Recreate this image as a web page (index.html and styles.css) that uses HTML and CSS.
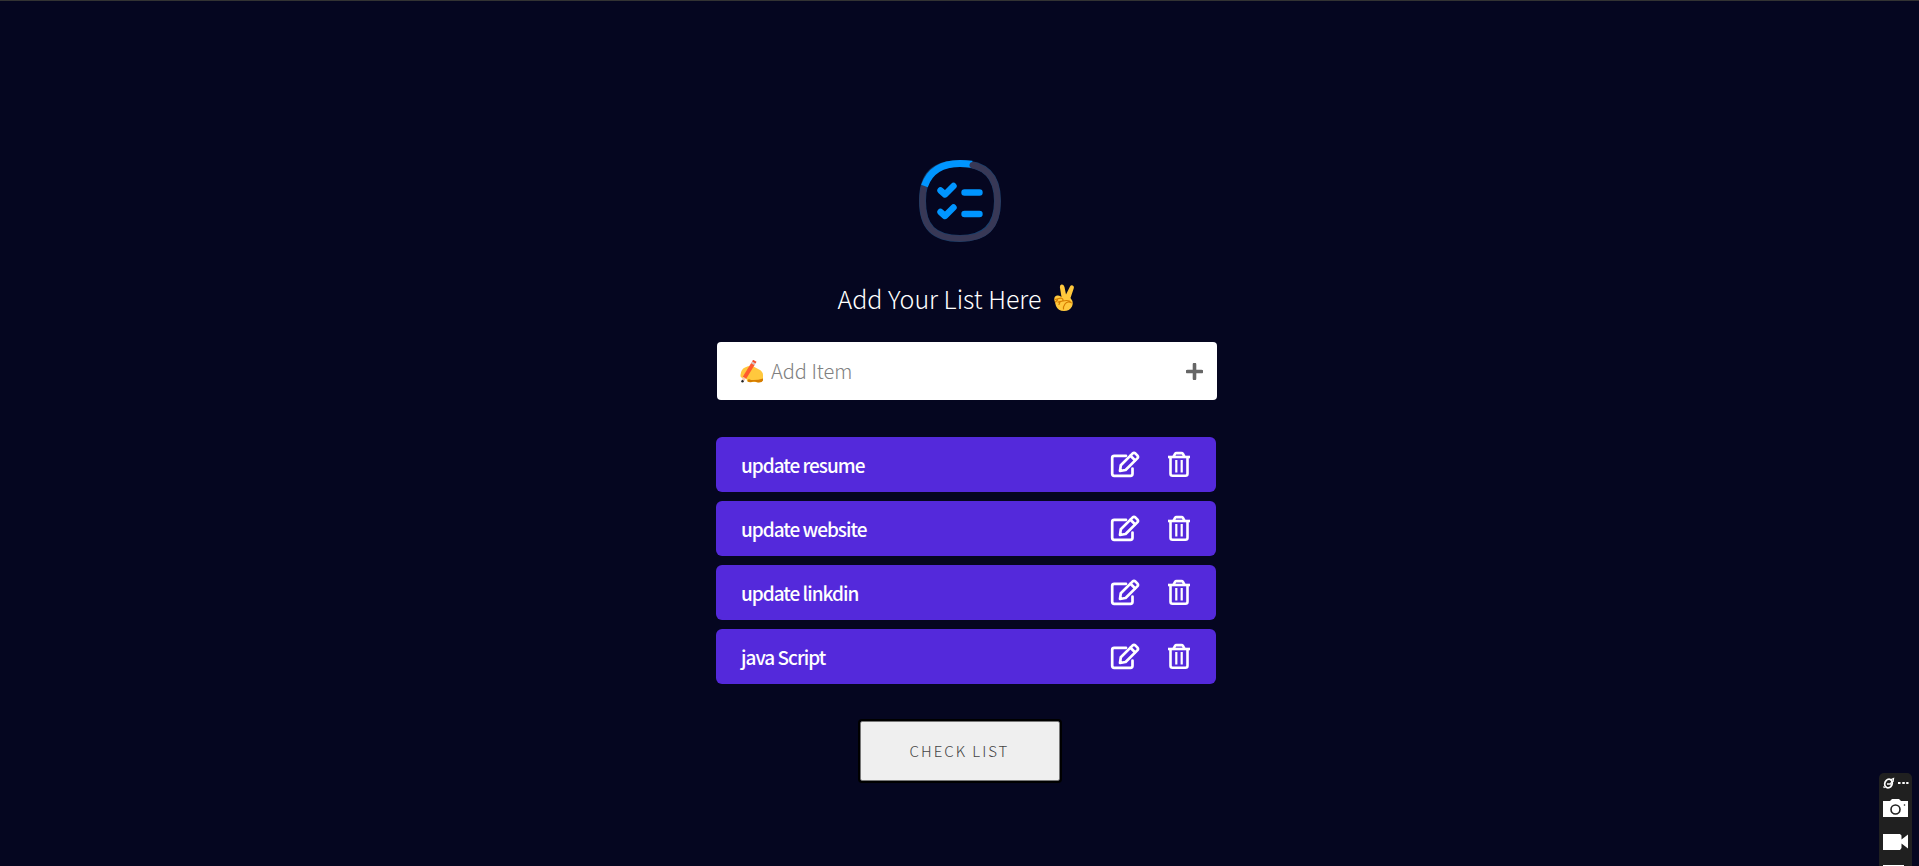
FILE: index.html
```html
<!DOCTYPE html>
<html lang="en">
<head>
<meta charset="utf-8">
<meta name="viewport" content="width=device-width, initial-scale=1">
<title>Check List</title>
<link rel="stylesheet" href="styles.css">
</head>
<body>
<svg class="defs" aria-hidden="true">
  <symbol id="edit" viewBox="0 0 30 27">
    <g fill="none" stroke="#fff" stroke-width="2.700" stroke-linejoin="round" stroke-linecap="round">
      <path d="M16 4.800H4.200Q2.200 4.800 2.200 6.800V22.800Q2.200 24.800 4.200 24.800H20.500Q22.500 24.800 22.500 22.800V17.500"/>
      <path d="M10.800 14.200 22.500 2.600Q24 1.300 25.500 2.600L27.300 4.400Q28.700 5.900 27.300 7.400L15.600 19 10 20Z"/>
      <path d="M20.500 4.700 25 9.200"/>
    </g>
  </symbol>
  <symbol id="trash" viewBox="0 0 22 27">
    <g fill="none" stroke="#fff" stroke-width="2.600">
      <path d="M0 6H22"/>
      <path d="M5.500 5.800 7 2.900Q7.500 2.100 8.500 2.100H13.500Q14.500 2.100 15 2.900L16.500 5.800"/>
      <path d="M2.500 6V22.800Q2.500 24.800 4.500 24.800H17.500Q19.500 24.800 19.500 22.800V6"/>
      <path d="M8.300 9V21.500M13.700 9V21.500" stroke-width="2.200"/>
    </g>
  </symbol>
</svg>
<main class="page">
  <svg class="logo" viewBox="0 0 82 82" role="img" aria-label="Check list">
    <path d="M41 3.500C67 3.500 78.500 17 78.500 41S67 78.500 41 78.500 3.500 67 3.500 41 15 3.500 41 3.500Z" fill="none" stroke="#193f6c" stroke-width="7"/>
    <path d="M53.500 5C71 9 78.500 22 78.500 41 78.500 67 67 78.500 41 78.500S3.500 67 3.500 41Q3.500 34 4.500 28.500" fill="none" stroke="#383856" stroke-width="6" stroke-linecap="round"/>
    <path d="M5.500 26C11 10 23 3.500 41 3.500Q47 3.500 53 4.200" fill="none" stroke="#0095ff" stroke-width="7"/>
    <path d="M53.500 5 58 6.200" stroke="#383856" stroke-width="6" stroke-linecap="round"/>
    <path d="M21.500 30.500 26 34.500 34.500 26M21.500 52 26 56 34.500 47.500M45.500 32.500H60.500M45.500 54H60.500" fill="none" stroke="#0095ff" stroke-width="6.400" stroke-linecap="round" stroke-linejoin="round"/>
  </svg>
  <h1 class="title">Add Your List Here
    <svg class="victory" viewBox="0 0 20 28" aria-hidden="true">
      <path d="M7.500 13 6 4Q5.500 1 7.500 .6T10.500 3L12 10.500 16 2.500Q17 .8 18.700 1.500T19.700 4.500L16.500 14Q20 18 18 22.500 15.500 27 10 27 4 27 2 22L.3 16Q0 12 3 11.500 6 11 7.500 13Z" fill="#ffc83d"/>
      <path d="M1 15.500 7 14Q10 15 8.500 17L4 18.200M1.500 18 3.500 16M9 17Q15 15.500 17 18.500Q13 17 11 20T9.500 25M6 18 5 20.500" fill="none" stroke="#d67d00" stroke-width="1.200" stroke-linecap="round"/>
    </svg>
  </h1>
  <form class="add">
    <svg class="writing" viewBox="0 0 23 23" aria-hidden="true">
      <path d="M.5 15Q1 9 5 7.500 9 5.500 13 6.200L19 9.500Q23 11.500 23 15V20Q21 23 16 22H10Q6 22 7 19.500L3 18Q0 17.500 .5 15Z" fill="#ffc83d"/>
      <path d="M8 19.500Q9.500 19 11 20 17 20.500 23 18.500V20.500Q22 23 17 22.200 14 21 11 22.200 6.500 22.500 8 19.500Z" fill="#d67d00"/>
      <path d="M13.200 3.500 4.500 17.800" stroke="#ff5b2e" stroke-width="4"/>
      <path d="M13.800 2.500 12.800 4.200" stroke="#d8c0c0" stroke-width="4"/>
      <path d="M14.800 .8 13.800 2.500" stroke="#f4502c" stroke-width="4"/>
      <path d="M4.500 17.800 3 20.300" stroke="#f3c5b0" stroke-width="3"/>
      <circle cx="2.500" cy="21.200" r="1.200" fill="#222"/>
    </svg>
    <input class="field" type="text" placeholder="Add Item" aria-label="Add Item">
    <button class="plus" type="button" aria-label="Add">
      <svg width="17" height="17" viewBox="0 0 17 17"><path d="M8.500 1.500V15.500M1.500 8.500H15.500" stroke="#666" stroke-width="3.600" stroke-linecap="round"/></svg>
    </button>
  </form>
  <ul class="list">
    <li class="row"><span class="name">update resume</span>
      <button class="act" aria-label="Edit update resume"><svg class="edit"><use href="#edit"/></svg></button>
      <button class="act" aria-label="Delete update resume"><svg class="trash"><use href="#trash"/></svg></button></li>
    <li class="row"><span class="name">update website</span>
      <button class="act" aria-label="Edit update website"><svg class="edit"><use href="#edit"/></svg></button>
      <button class="act" aria-label="Delete update website"><svg class="trash"><use href="#trash"/></svg></button></li>
    <li class="row"><span class="name">update linkdin</span>
      <button class="act" aria-label="Edit update linkdin"><svg class="edit"><use href="#edit"/></svg></button>
      <button class="act" aria-label="Delete update linkdin"><svg class="trash"><use href="#trash"/></svg></button></li>
    <li class="row"><span class="name">java Script</span>
      <button class="act" aria-label="Edit java Script"><svg class="edit"><use href="#edit"/></svg></button>
      <button class="act" aria-label="Delete java Script"><svg class="trash"><use href="#trash"/></svg></button></li>
  </ul>
  <button class="check" type="button">CHECK LIST</button>
</main>
<aside class="recorder" aria-label="Screen recorder">
  <svg width="33" height="94" viewBox="0 0 33 94" aria-hidden="true">
    <g fill="none" stroke="#fff">
      <ellipse cx="9.500" cy="10.500" rx="3.600" ry="4.400" transform="rotate(25 9.500 10.500)" stroke-width="1.800"/>
      <path d="M8 11H11.500L13 8M11 7 14.500 5.500 14 9M4.500 13.500 5.500 15" stroke-width="1.300"/>
    </g>
    <path d="M19 9h2.500v2H19zM23.300 9h2.500v2h-2.500zM27.200 9H29.500v2H27.200z" fill="#fff"/>
    <path d="M4 28H11L13 26H20L22 28H29V44H4Z" fill="#fff"/>
    <circle cx="16.500" cy="36.500" r="4.500" fill="none" stroke="#202020" stroke-width="1.600"/>
    <circle cx="25.500" cy="32" r=".8" fill="#202020"/>
    <path d="M4 61H21L22.500 62.500V66.500L29 61.500V75.500L22.500 70.500V75L21 77H4Z" fill="#fff"/>
    <path d="M4 92H25V94H4Z" fill="#fff"/>
  </svg>
</aside>
</body>
</html>
```
FILE: styles.css
```css
* { box-sizing: border-box; }

body {
  margin: 0;
  min-height: 100vh;
  background: #050620;
  border-top: 1px solid #333;
  color: #fff;
  font-family: "Noto Sans CJK SC", "Noto Sans", sans-serif;
  overflow: hidden;
}

button, input { font: inherit; }
button { cursor: pointer; }
.defs { position: absolute; width: 0; height: 0; }

.page {
  display: flex;
  flex-direction: column;
  align-items: center;
  padding: 159px 16px 80px;
}

.logo { width: 82px; height: 82px; }

.title {
  display: flex;
  align-items: center;
  gap: 12px;
  margin: 34px 8px 22px 0;
  font-size: 25px;
  font-weight: 300;
  line-height: 44px;
}
.victory { width: 20px; height: 28px; }

.add {
  display: flex;
  align-items: center;
  width: 100%;
  max-width: 500px;
  height: 58px;
  margin-left: 15px;
  padding: 0 8px 0 23px;
  background: #fff;
  border-radius: 4px;
}
.writing { width: 23px; height: 23px; }
.field {
  flex: 1;
  min-width: 0;
  padding: 0 0 2px 8px;
  border: 0;
  outline: 0;
  background: none;
  color: #444;
  font-size: 20px;
  font-weight: 300;
}
.field::placeholder { color: #808080; opacity: 1; }
.plus {
  display: flex;
  padding: 6px;
  border: 0;
  background: none;
}

.list {
  display: grid;
  gap: 9px;
  width: 100%;
  max-width: 500px;
  margin: 37px 0 37px 13px;
  padding: 0;
  list-style: none;
}
.row {
  display: flex;
  align-items: center;
  height: 55px;
  padding: 0 20px 0 25px;
  background: #5429db;
  border-radius: 6px;
}
.name {
  flex: 1;
  font-size: 19px;
  font-weight: 500;
  letter-spacing: -1px;
}
.act {
  display: flex;
  padding: 0 6px;
  border: 0;
  background: none;
}
.act + .act { margin-left: 16px; }
.edit { width: 30px; height: 27px; }
.trash { width: 22px; height: 27px; }

.check {
  width: 200px;
  height: 60px;
  padding: 0 0 2px;
  border: 1px solid #777;
  border-radius: 2px;
  outline: 2px solid #000;
  background: #efefef;
  color: #444;
  font-size: 15px;
  font-weight: 300;
  letter-spacing: 2px;
}

.recorder {
  position: fixed;
  right: 7px;
  bottom: 0;
  height: 93px;
  overflow: hidden;
  background: #202020;
  border-radius: 5px 5px 0 0;
}
```
